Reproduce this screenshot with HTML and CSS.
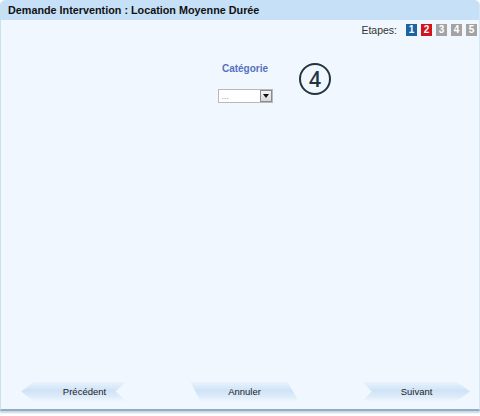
FILE: index.html
```html
<!DOCTYPE html>
<html lang="fr">
<head>
<meta charset="utf-8">
<title>Demande Intervention</title>
<link rel="stylesheet" href="styles.css">
</head>
<body>
<div class="panel">
  <div class="header">Demande Intervention : Location Moyenne Durée</div>
  <div class="content">
    <div class="steps">
      <span class="steps-label">Etapes:</span>
      <span class="step step-done">1</span>
      <span class="step step-current">2</span>
      <span class="step">3</span>
      <span class="step">4</span>
      <span class="step">5</span>
    </div>
    <div class="field">
      <div class="field-label">Catégorie</div>
      <div class="select">
        <span class="select-value">...</span>
        <span class="select-btn"><span class="arrow"></span></span>
      </div>
      <div class="badge">4</div>
    </div>
    <div class="spacer"></div>
    <div class="footer">
      <div class="btn btn-prev">Précédent</div>
      <div class="btn btn-cancel">Annuler</div>
      <div class="btn btn-next">Suivant</div>
    </div>
  </div>
</div>
</body>
</html>
```
FILE: styles.css
```css
html, body {
  margin: 0;
  padding: 0;
  background: #ffffff;
}
body {
  font-family: "Liberation Sans", Arial, sans-serif;
  width: 480px;
  height: 416px;
  overflow: hidden;
}
.panel {
  width: 480px;
  height: 411px;
  box-sizing: border-box;
  display: flex;
  flex-direction: column;
  background: #f0f7fe;
  border-left: 1px solid #c7e3e6;
  border-right: 1px solid #d6e8f5;
  border-bottom: 2px solid #93adc8;
  border-radius: 5px 5px 0 0;
  box-shadow: 0 2px 2px #c9d6e3;
}
.header {
  height: 20px;
  line-height: 21px;
  background: #c6e0f8;
  border-radius: 5px 5px 0 0;
  padding-left: 7px;
  font-size: 10.8px;
  font-weight: bold;
  color: #111;
}
.content {
  flex: 1;
  display: flex;
  flex-direction: column;
}
.steps {
  display: flex;
  justify-content: flex-end;
  align-items: center;
  padding: 4px 2px 0 0;
  gap: 4px;
}
.steps-label {
  font-size: 10.5px;
  color: #333;
  margin-right: 5px;
}
.step {
  width: 11px;
  height: 12px;
  line-height: 12px;
  text-align: center;
  background: #a3a3a3;
  color: #fff;
  font-size: 10px;
  font-weight: bold;
}
.step-done {
  background: #1b64a0;
}
.step-current {
  background: #d2121c;
}
.field {
  position: relative;
  display: flex;
  flex-direction: column;
  align-items: center;
  margin-top: 27px;
  padding-left: 10px;
}
.field-label {
  font-size: 10px;
  font-weight: bold;
  color: #5670c3;
}
.select {
  margin-top: 15px;
  width: 55px;
  height: 14px;
  box-sizing: border-box;
  display: flex;
  justify-content: space-between;
  align-items: center;
  background: #fff;
  border: 1px solid #b9b9b9;
}
.select-value {
  font-size: 9px;
  color: #999;
  padding-left: 3px;
  line-height: 8px;
}
.select-btn {
  width: 12px;
  height: 12px;
  box-sizing: border-box;
  border: 1px solid #8a8a8a;
  background: linear-gradient(#f4f4f4, #d8d8d8);
  display: flex;
  align-items: center;
  justify-content: center;
}
.arrow {
  width: 0;
  height: 0;
  border-left: 3px solid transparent;
  border-right: 3px solid transparent;
  border-top: 4px solid #111;
}
.badge {
  position: absolute;
  left: 298px;
  top: 0;
  width: 28px;
  height: 28px;
  border: 2.5px solid #24343e;
  border-radius: 50%;
  display: flex;
  align-items: center;
  justify-content: center;
  font-size: 21px;
  font-weight: 600;
  color: #24343e;
  font-family: "Open Sans", "Liberation Sans", sans-serif;
}
.spacer {
  flex: 1;
}
.footer {
  display: flex;
  justify-content: space-between;
  padding: 0 9px 8px 20px;
}
.btn {
  height: 19px;
  line-height: 19px;
  text-align: center;
  font-size: 9.5px;
  color: #222;
  box-sizing: border-box;
  background: linear-gradient(to bottom, #e9f3fd 0%, #cfe3f7 45%, #dcebf9 75%, #eef6fe 100%);
}
.btn-prev {
  width: 105px;
  padding-left: 22px;
  clip-path: polygon(0 50%, 12% 0, 100% 0, 90% 50%, 100% 100%, 12% 100%);
}
.btn-cancel {
  width: 108px;
  clip-path: polygon(0 0, 90% 0, 100% 100%, 9% 100%);
}
.btn-next {
  width: 107px;
  clip-path: polygon(0 0, 88% 0, 100% 50%, 88% 100%, 0 100%, 8% 50%);
}
```
